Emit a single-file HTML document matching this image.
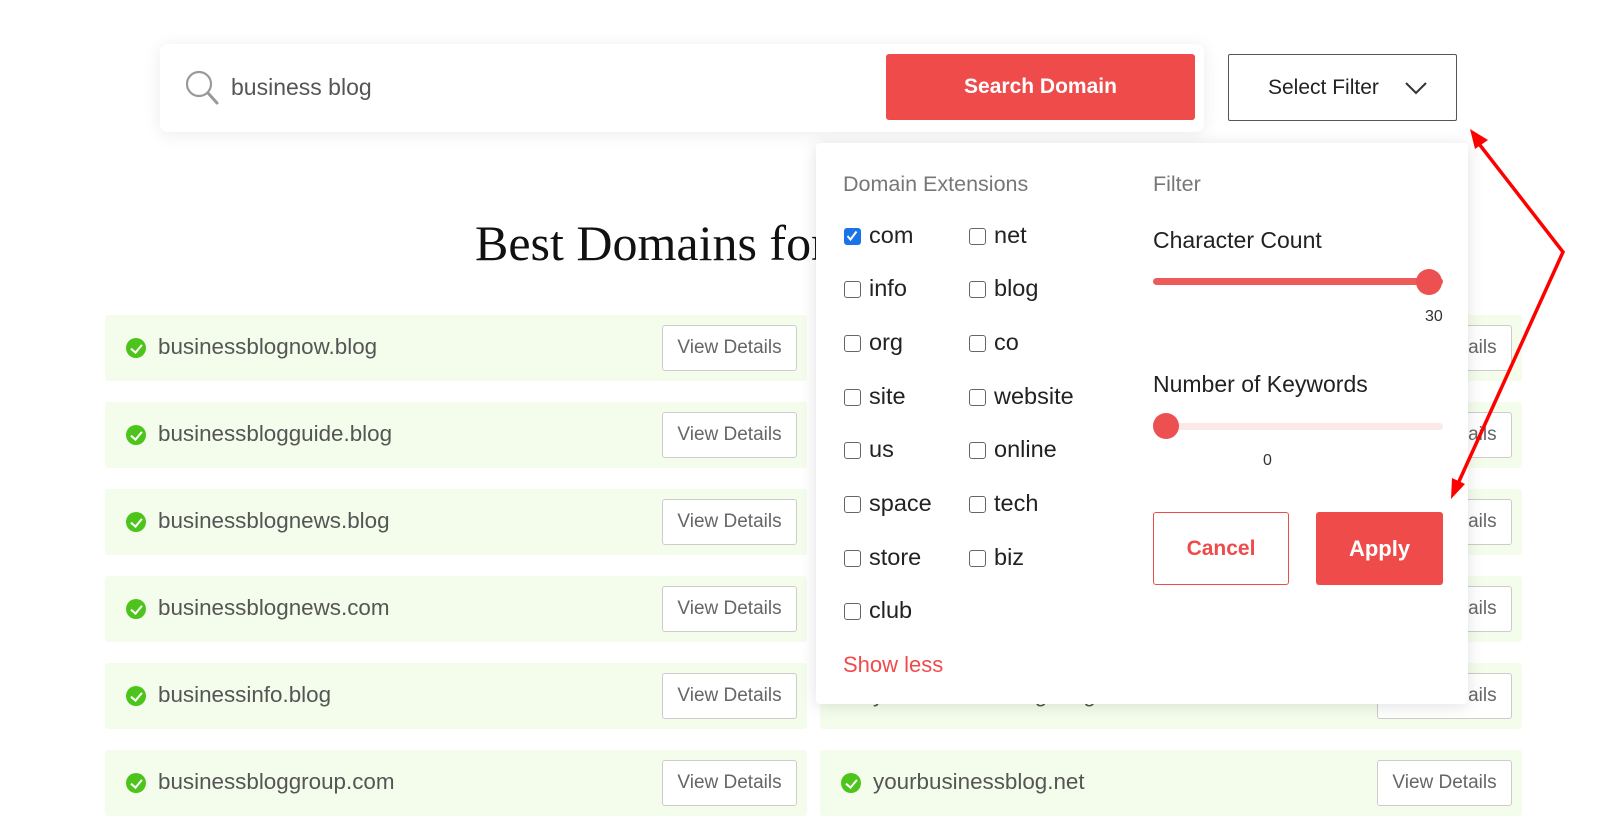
<!DOCTYPE html>
<html><head><meta charset="utf-8"><style>
*{box-sizing:border-box;margin:0;padding:0}
body{width:1617px;height:821px;background:#fff;position:relative;overflow:hidden;font-family:"Liberation Sans",sans-serif}
.abs{position:absolute}
.sbox{left:160px;top:44px;width:1044px;height:88px;background:#fff;border-radius:8px;box-shadow:0 2px 18px rgba(0,0,0,.08)}
.btn-s{left:886px;top:54px;width:309px;height:66px;background:#ef4b4b;border-radius:3px;color:#fff;font-weight:bold;font-size:21px;display:flex;align-items:center;justify-content:center}
.filt{left:1228px;top:54px;width:229px;height:67px;border:1px solid #555;border-radius:2px;font-size:21px;color:#222;display:flex;align-items:center;padding-left:39px}
.h1{left:475px;top:214px;font-family:"Liberation Serif",serif;font-size:50px;color:#111}
.row{height:66px;background:#f4fdec;border-radius:3px}
.row .d{position:absolute;left:53px;top:19px;font-size:22.4px;color:#555}
.row .ic{position:absolute;left:21px;top:23px;width:20px;height:20px;border-radius:50%;background:#4cc41b}
.row .ic:after{content:"";position:absolute;left:7px;top:4px;width:5px;height:9px;border:solid #fff;border-width:0 2px 2px 0;transform:rotate(40deg)}
.vd{position:absolute;right:10px;top:10px;width:135px;height:46px;border:1px solid #ccc;border-radius:3px;background:#fff;color:#666;font-size:19px;display:flex;align-items:center;justify-content:center}
.panel{left:816px;top:143px;width:652px;height:561px;background:#fff;border-radius:4px;box-shadow:0 2px 16px rgba(0,0,0,.12)}
.lbl{font-size:21.5px;color:#777}
.cb{position:absolute;width:17px;height:17px;border:1.5px solid #666;border-radius:3px;background:#fff}
.ct{position:absolute;font-size:23.5px;color:#222}
</style></head><body>
<div class="abs sbox"></div>
<svg class="abs" style="left:185px;top:70px" width="36" height="36" viewBox="0 0 36 36"><circle cx="14" cy="14" r="12" fill="none" stroke="#999" stroke-width="2.2"/><line x1="23" y1="23" x2="32" y2="33" stroke="#999" stroke-width="3" stroke-linecap="round"/></svg>
<div class="abs" style="left:231px;top:74px;font-size:23px;color:#555">business blog</div>
<div class="abs btn-s">Search Domain</div>
<div class="abs filt">Select Filter<svg style="margin-left:26px" width="22" height="14" viewBox="0 0 22 14"><path d="M1 2 L11 12 L21 2" fill="none" stroke="#333" stroke-width="2"/></svg></div>
<div class="abs h1">Best Domains for business blog</div>

<div class="abs row" style="left:105px;top:315px;width:702px"><div class="ic"></div><div class="d">businessblognow.blog</div><div class="vd">View Details</div></div>
<div class="abs row" style="left:105px;top:402px;width:702px"><div class="ic"></div><div class="d">businessblogguide.blog</div><div class="vd">View Details</div></div>
<div class="abs row" style="left:105px;top:489px;width:702px"><div class="ic"></div><div class="d">businessblognews.blog</div><div class="vd">View Details</div></div>
<div class="abs row" style="left:105px;top:576px;width:702px"><div class="ic"></div><div class="d">businessblognews.com</div><div class="vd">View Details</div></div>
<div class="abs row" style="left:105px;top:663px;width:702px"><div class="ic"></div><div class="d">businessinfo.blog</div><div class="vd">View Details</div></div>
<div class="abs row" style="left:105px;top:750px;width:702px"><div class="ic"></div><div class="d">businessbloggroup.com</div><div class="vd">View Details</div></div>

<div class="abs row" style="left:820px;top:315px;width:702px"><div class="vd">View Details</div></div>
<div class="abs row" style="left:820px;top:402px;width:702px"><div class="vd">View Details</div></div>
<div class="abs row" style="left:820px;top:489px;width:702px"><div class="vd">View Details</div></div>
<div class="abs row" style="left:820px;top:576px;width:702px"><div class="vd">View Details</div></div>
<div class="abs row" style="left:820px;top:663px;width:702px"><div class="d">yourbusinessblog.blog</div><div class="vd">View Details</div></div>
<div class="abs row" style="left:820px;top:750px;width:702px"><div class="ic"></div><div class="d">yourbusinessblog.net</div><div class="vd">View Details</div></div>

<div class="abs panel">
<div class="abs lbl" style="left:27px;top:29px">Domain Extensions</div>
<div class="abs lbl" style="left:337px;top:29px">Filter</div>
<div class="cb" style="left:28px;top:85px;background:#1a73e8;border-color:#1a73e8"><svg width="14" height="14" viewBox="0 0 14 14" style="position:absolute;left:0;top:0"><path d="M2.5 7 L5.5 10.5 L11.5 2.5" fill="none" stroke="#fff" stroke-width="2"/></svg></div>
<div class="ct" style="left:53px;top:79px">com</div>
<div class="cb" style="left:153px;top:85px"></div><div class="ct" style="left:178px;top:79px">net</div>
<div class="cb" style="left:28px;top:138px"></div><div class="ct" style="left:53px;top:132px">info</div>
<div class="cb" style="left:153px;top:138px"></div><div class="ct" style="left:178px;top:132px">blog</div>
<div class="cb" style="left:28px;top:192px"></div><div class="ct" style="left:53px;top:186px">org</div>
<div class="cb" style="left:153px;top:192px"></div><div class="ct" style="left:178px;top:186px">co</div>
<div class="cb" style="left:28px;top:246px"></div><div class="ct" style="left:53px;top:240px">site</div>
<div class="cb" style="left:153px;top:246px"></div><div class="ct" style="left:178px;top:240px">website</div>
<div class="cb" style="left:28px;top:299px"></div><div class="ct" style="left:53px;top:293px">us</div>
<div class="cb" style="left:153px;top:299px"></div><div class="ct" style="left:178px;top:293px">online</div>
<div class="cb" style="left:28px;top:353px"></div><div class="ct" style="left:53px;top:347px">space</div>
<div class="cb" style="left:153px;top:353px"></div><div class="ct" style="left:178px;top:347px">tech</div>
<div class="cb" style="left:28px;top:407px"></div><div class="ct" style="left:53px;top:401px">store</div>
<div class="cb" style="left:153px;top:407px"></div><div class="ct" style="left:178px;top:401px">biz</div>
<div class="cb" style="left:28px;top:460px"></div><div class="ct" style="left:53px;top:454px">club</div>
<div class="abs" style="left:27px;top:509px;font-size:22px;color:#ef4b4b">Show less</div>

<div class="abs" style="left:337px;top:84px;font-size:23px;color:#222">Character Count</div>
<div class="abs" style="left:337px;top:135px;width:290px;height:7px;border-radius:4px;background:#ec5a5a"></div>
<div class="abs" style="left:600px;top:126px;width:26px;height:26px;border-radius:50%;background:#ec5050"></div>
<div class="abs" style="left:609px;top:165px;font-size:16px;color:#333">30</div>
<div class="abs" style="left:337px;top:228px;font-size:23px;color:#222">Number of Keywords</div>
<div class="abs" style="left:337px;top:280px;width:290px;height:7px;border-radius:4px;background:#fbe9e9"></div>
<div class="abs" style="left:337px;top:270px;width:26px;height:26px;border-radius:50%;background:#ec5050"></div>
<div class="abs" style="left:447px;top:309px;font-size:16px;color:#333">0</div>
<div class="abs" style="left:337px;top:369px;width:136px;height:73px;border:1px solid #ef4b4b;border-radius:3px;color:#ef4b4b;font-weight:bold;font-size:21px;display:flex;align-items:center;justify-content:center">Cancel</div>
<div class="abs" style="left:500px;top:369px;width:127px;height:73px;background:#ef4b4b;border-radius:3px;color:#fff;font-weight:bold;font-size:22px;display:flex;align-items:center;justify-content:center">Apply</div>
</div>

<svg class="abs" style="left:0;top:0" width="1617" height="821">
<path d="M1476 140 L1563 252 L1456 488" fill="none" stroke="#f00" stroke-width="3.5"/>
<polygon points="1470,129 1488,140 1475,149" fill="#f00"/>
<polygon points="1451,499 1452,478 1465,484" fill="#f00"/>
</svg>
</body></html>
